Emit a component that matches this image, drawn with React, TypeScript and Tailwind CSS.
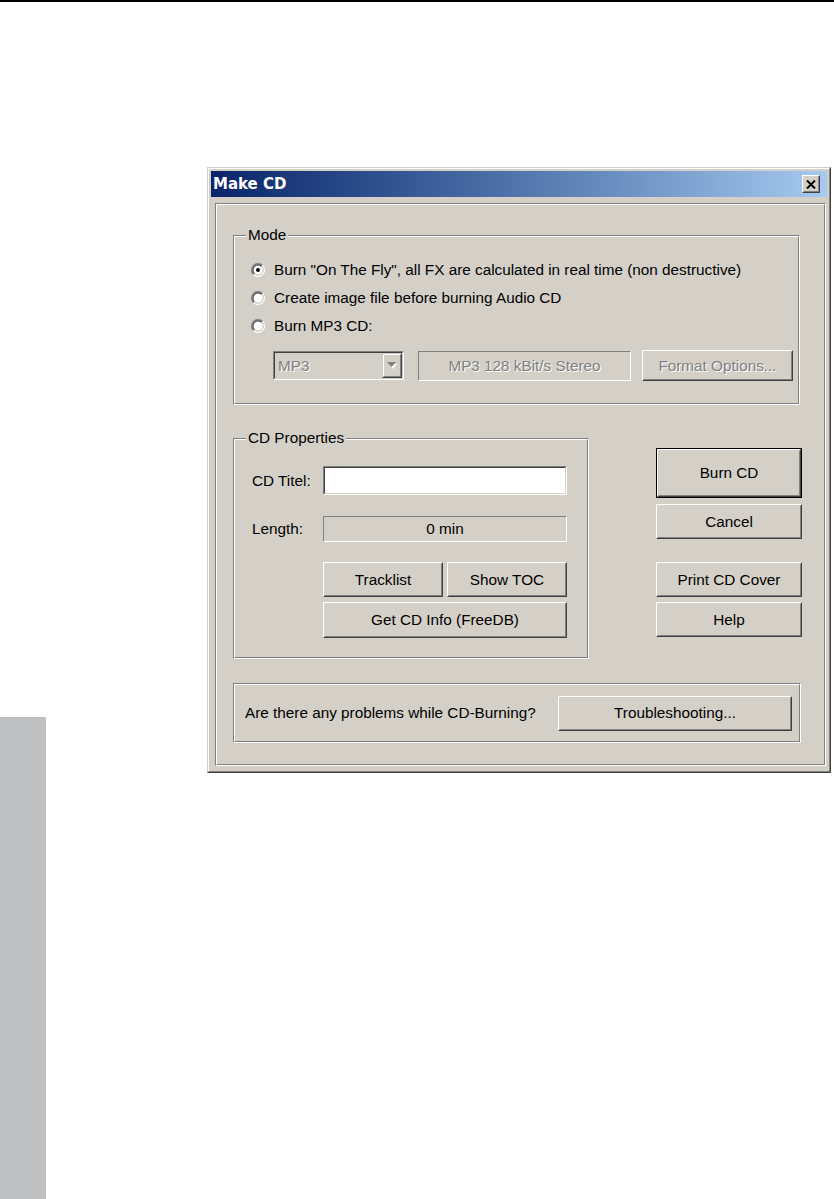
import React from "react";

const FONT = "font-['Liberation_Sans',Arial,sans-serif] text-[15.3px] leading-none text-black";

function Raised({
  className,
  children,
  disabled,
  isDefault,
}: {
  className: string;
  children: React.ReactNode;
  disabled?: boolean;
  isDefault?: boolean;
}) {
  const inner = (
    <div className="h-full border border-t-white border-l-white border-r-[#404040] border-b-[#404040]">
      <div
        className={
          "h-full border border-t-[#d4d0c8] border-l-[#d4d0c8] border-r-[#808080] border-b-[#808080] flex items-center justify-center " +
          (disabled ? "text-[#808080] [text-shadow:1px_1px_0_#ffffff]" : "text-black")
        }
      >
        {children}
      </div>
    </div>
  );
  return isDefault ? (
    <div className={className + " border border-black"}>{inner}</div>
  ) : (
    <div className={className}>{inner}</div>
  );
}

function Etched({ className, children }: { className: string; children?: React.ReactNode }) {
  return (
    <div className={className + " border border-t-[#808080] border-l-[#808080] border-r-white border-b-white"}>
      <div className="h-full border border-t-white border-l-white border-r-[#808080] border-b-[#808080]">
        {children}
      </div>
    </div>
  );
}

function Group({
  label,
  className,
  inner,
  children,
}: {
  label?: string;
  className: string;
  inner: string;
  children?: React.ReactNode;
}) {
  return (
    <div className={"relative " + className}>
      <Etched className="h-full">
        <div className={inner}>{children}</div>
      </Etched>
      {label ? (
        <span className="absolute left-[13px] top-[-8px] bg-[#d4d0c8] px-[2px] leading-[16px]">{label}</span>
      ) : null}
    </div>
  );
}

function Radio({ checked }: { checked?: boolean }) {
  return (
    <svg width="14" height="14" viewBox="0 0 12 12" className="shrink-0">
      <circle cx="6" cy="6" r="4.2" fill="#ffffff" />
      <path d="M2.11 9.89 A5.5 5.5 0 0 1 9.89 2.11" fill="none" stroke="#808080" strokeWidth="1" />
      <path d="M9.89 2.11 A5.5 5.5 0 0 1 2.11 9.89" fill="none" stroke="#ffffff" strokeWidth="1" />
      <path d="M2.82 9.18 A4.5 4.5 0 0 1 9.18 2.82" fill="none" stroke="#404040" strokeWidth="1" />
      <path d="M9.18 2.82 A4.5 4.5 0 0 1 2.82 9.18" fill="none" stroke="#d4d0c8" strokeWidth="1" />
      {checked ? <circle cx="6" cy="6" r="1.7" fill="#000000" /> : null}
    </svg>
  );
}

function RadioRow({ checked, label, className }: { checked?: boolean; label: string; className: string }) {
  return (
    <div className={"flex items-center h-[20px] " + className}>
      <Radio checked={checked} />
      <span className="ml-[9px]">{label}</span>
    </div>
  );
}

export default function App() {
  return (
    <div className={"w-[834px] h-[1199px] bg-white overflow-hidden " + FONT}>
      <div className="h-[2px] bg-black" />
      <div className="flex">
        <div className="w-[46px] mt-[715px] h-[482px] bg-[#bfc0c2] shrink-0" />
        <div className="ml-[161px] mt-[165px] w-[624px] h-[606px] shrink-0 border border-t-[#d4d0c8] border-l-[#d4d0c8] border-r-[#404040] border-b-[#404040]">
          <div className="h-full border border-t-white border-l-white border-r-[#808080] border-b-[#808080] bg-[#d4d0c8] p-[2px]">
            {/* Title bar */}
            <div className="h-[26px] w-[616px] bg-gradient-to-r from-[#0a246a] to-[#a6caf0] flex items-center">
              <span className="ml-[2px] font-['DejaVu_Sans',Tahoma,sans-serif] font-bold text-[15px] text-white leading-none">
                Make CD
              </span>
              <div className="ml-auto mr-[7px] w-[18px] h-[18px] border border-t-white border-l-white border-r-[#404040] border-b-[#404040]">
                <div className="h-full bg-[#d4d0c8] border border-t-[#d4d0c8] border-l-[#d4d0c8] border-r-[#808080] border-b-[#808080] flex items-center justify-center">
                  <svg width="10" height="9" viewBox="0 0 10 9">
                    <path d="M1 0.5 L9 8.5 M9 0.5 L1 8.5" stroke="#000000" strokeWidth="2" />
                  </svg>
                </div>
              </div>
            </div>

            {/* Etched panel */}
            <Etched className="mt-[6px] ml-[4px] w-[611px] h-[563px]">
              <div className="pl-[16px] pt-[30px] flex flex-col">
                {/* Mode */}
                <Group label="Mode" className="w-[567px] h-[170px]" inner="pl-[16px] pt-[23px] flex flex-col">
                  <RadioRow
                    checked
                    className=""
                    label={'Burn "On The Fly", all FX are calculated in real time (non destructive)'}
                  />
                  <RadioRow className="mt-[8px]" label="Create image file before burning Audio CD" />
                  <RadioRow className="mt-[8px]" label="Burn MP3 CD:" />
                  <div className="mt-[14px] ml-[22px] flex items-center h-[31px]">
                    {/* combo */}
                    <div className="w-[131px] h-[29px] border border-t-[#808080] border-l-[#808080] border-r-white border-b-white">
                      <div className="h-full border border-t-[#404040] border-l-[#404040] border-r-[#d4d0c8] border-b-[#d4d0c8] flex items-center bg-[#d4d0c8]">
                        <span className="pl-[3px] text-[#808080] [text-shadow:1px_1px_0_#ffffff]">MP3</span>
                        <div className="ml-auto w-[20px] h-full border border-t-[#d4d0c8] border-l-[#d4d0c8] border-r-[#404040] border-b-[#404040]">
                          <div className="h-full border border-t-white border-l-white border-r-[#808080] border-b-[#808080] flex items-center justify-center">
                            <svg width="10" height="7" viewBox="0 0 10 7">
                              <path d="M1 1 H9 L5 6 Z" fill="#ffffff" transform="translate(1 1)" />
                              <path d="M0 0 H9 L4.5 5 Z" fill="#808080" />
                            </svg>
                          </div>
                        </div>
                      </div>
                    </div>
                    <div className="ml-[14px] w-[213px] h-[30px] border border-t-[#808080] border-l-[#808080] border-r-white border-b-white flex items-center justify-center text-[#808080] [text-shadow:1px_1px_0_#ffffff]">
                      MP3 128 kBit/s Stereo
                    </div>
                    <Raised className="ml-[11px] w-[151px] h-[31px]" disabled>
                      Format Options...
                    </Raised>
                  </div>
                </Group>

                {/* Middle row */}
                <div className="mt-[33px] flex items-start">
                  <Group label="CD Properties" className="w-[356px] h-[221px]" inner="pl-[17px] pt-[26px] flex flex-col">
                    <div className="flex items-center h-[29px]">
                      <span className="w-[71px]">CD Titel:</span>
                      <div className="w-[244px] h-[29px] border border-t-[#808080] border-l-[#808080] border-r-white border-b-white">
                        <div className="h-full bg-white border border-t-[#404040] border-l-[#404040] border-r-[#d4d0c8] border-b-[#d4d0c8]" />
                      </div>
                    </div>
                    <div className="mt-[21px] flex items-center h-[26px]">
                      <span className="w-[71px]">Length:</span>
                      <div className="w-[244px] h-[26px] border border-t-[#808080] border-l-[#808080] border-r-white border-b-white flex items-center justify-center">
                        0 min
                      </div>
                    </div>
                    <div className="mt-[20px] ml-[71px] flex gap-[4px]">
                      <Raised className="w-[120px] h-[35px]">Tracklist</Raised>
                      <Raised className="w-[120px] h-[35px]">Show TOC</Raised>
                    </div>
                    <Raised className="mt-[5px] ml-[71px] w-[244px] h-[36px]">Get CD Info (FreeDB)</Raised>
                  </Group>

                  <div className="ml-[67px] w-[146px] pt-[10px] flex flex-col">
                    <Raised className="h-[50px]" isDefault>
                      Burn CD
                    </Raised>
                    <Raised className="mt-[6px] h-[35px]">Cancel</Raised>
                    <Raised className="mt-[23px] h-[35px]">Print CD Cover</Raised>
                    <Raised className="mt-[5px] h-[35px]">Help</Raised>
                  </div>
                </div>

                {/* Bottom */}
                <Group className="mt-[24px] w-[568px] h-[60px]" inner="h-full flex items-center justify-between pl-[10px] pr-[7px]">
                  <span>Are there any problems while CD-Burning?</span>
                  <Raised className="w-[234px] h-[35px]">Troubleshooting...</Raised>
                </Group>
              </div>
            </Etched>
          </div>
        </div>
      </div>
    </div>
  );
}
